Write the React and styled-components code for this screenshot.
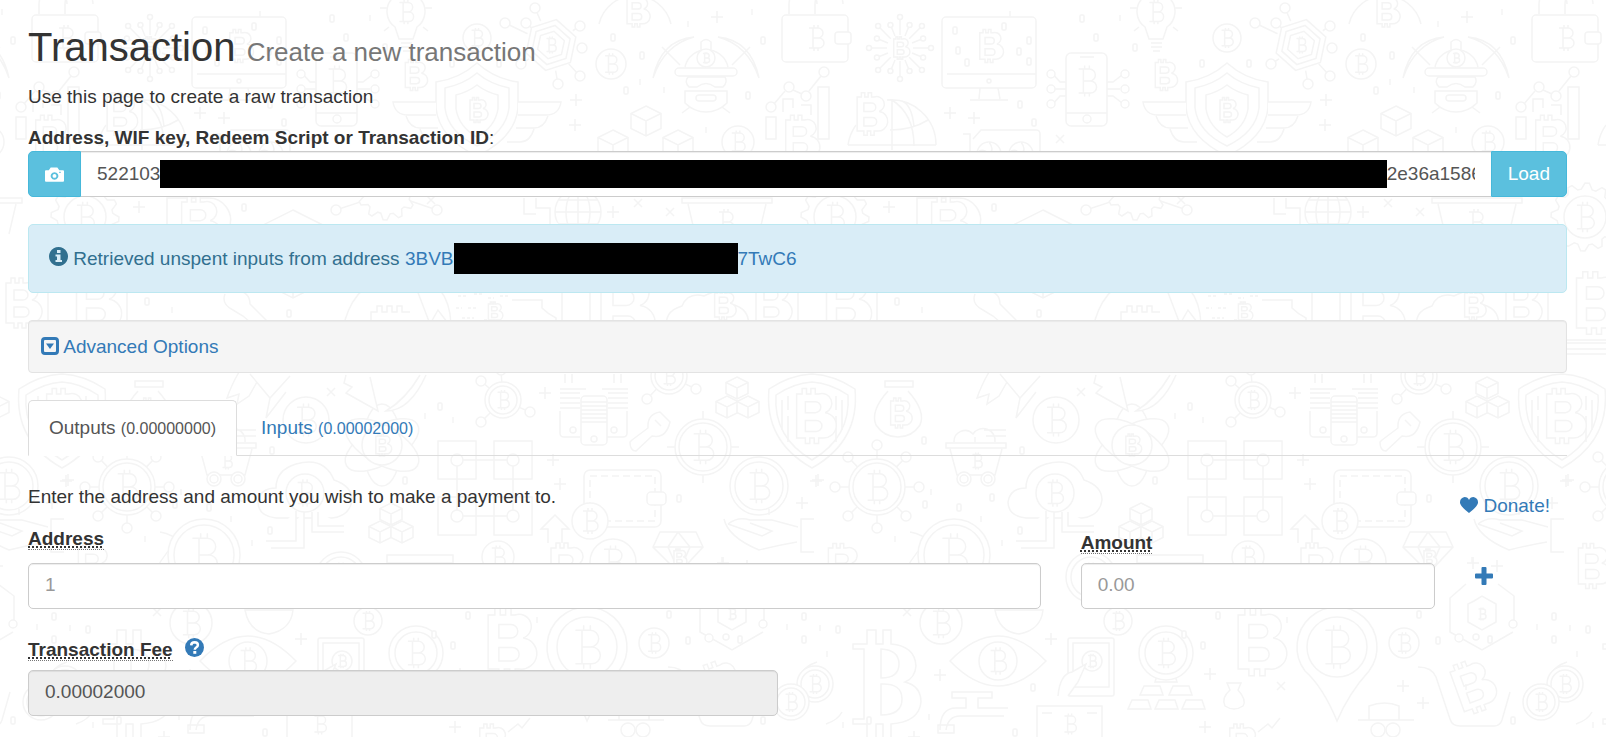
import { useState } from "react";
import styled, { createGlobalStyle } from "styled-components";

const COIN_MARK =
	"M-7-10H2a5 5 0 0 1 0 10H-3M2 0h1a5 5 0 0 1 0 10H-7M-3-10V10M-2-13v3M2-13v3M-2 10v3M2 10v3";
const FAT_MARK =
	"M-14-20h5v-5h4v5h4v-5h4v5h3a9 9 0 0 1 6 17a11 11 0 0 1-3 23h-3v5h-4v-5h-4v5h-4v-5h-8zM-6-13h9a5 5 0 0 1 0 10h-9zM-6 4h10a5 5 0 0 1 0 10h-10z";

const Mark = ({ x, y, s = 1, fat, turn = 0 }) => (
	<path
		d={fat ? FAT_MARK : COIN_MARK}
		vectorEffect="non-scaling-stroke"
		transform={`translate(${x} ${y}) rotate(${turn}) scale(${s})`}
	/>
);

const Coin = ({ x, y, r, ring }) => (
	<>
		<circle cx={x} cy={y} r={r} />
		{ring && <circle cx={x} cy={y} r={ring} />}
		<Mark x={x} y={y} s={(ring || r) / 18} />
	</>
);

const Cube = ({ x, y, r }) => (
	<path
		vectorEffect="non-scaling-stroke"
		transform={`translate(${x} ${y}) scale(${r})`}
		d="M0-1L1-.5V.5L0 1L-1 .5V-.5zM-1-.5L0 0L1-.5M0 0V1"
	/>
);

// twelve teeth, alternating between an inner and an outer radius
const Gear = ({ x, y, r }) => {
	const points = Array.from({ length: 48 }, (_, i) => {
		const a = (i * Math.PI) / 24;
		const reach = i % 4 < 2 ? r + 4 : r - 2;
		return `${(x + reach * Math.cos(a)).toFixed(1)},${(y + reach * Math.sin(a)).toFixed(1)}`;
	});
	return <polygon points={points.join(" ")} />;
};

const Node = ({ from, to, r = 5 }) => (
	<>
		<path d={`M${from}L${to}`} />
		<circle cx={to[0]} cy={to[1]} r={r} />
	</>
);

// [x, y, radius, inner ring]
const coins = [
	[611, 64, 15], [738, 142, 16], [477, 38, 14], [703, 447, 28, 24], [9, 486, 29, 24],
	[306, 420, 23], [204, 555, 36, 30], [613, 562, 23], [191, 623, 21], [368, 621, 14],
	[416, 653, 27, 21], [654, 643, 15], [498, 557, 16], [341, 577, 25, 20], [65, 684, 18, 14],
	[41, 702, 18, 14], [85, 217, 21], [503, 400, 18, 14], [669, 376, 18, 14], [127, 487, 28, 24],
];

const fatMarks = [
	[239, 46, 0.66], [49, 139, 0.95], [119, 114, 0.85], [636, 11, 0.64], [477, 110, 0.5],
	[414, 75, 0.62], [94, 303, 1.25], [62, 416, 1.1], [149, 413, 0.6], [91, 566, 0.9],
	[507, 642, 1.35], [494, 312, 0.4], [622, 310, 1.5], [723, 305, 0.6], [197, 224, 1.1],
	[382, 445, 0.44], [565, 568, 1], [491, 744, 0.8], [679, 558, 0.36], [20, 303, 1],
];

const hubs = [
	[[127, 487], 28, [[127, 445], [156, 457], [169, 487], [156, 516], [127, 528], [98, 516], [85, 487], [98, 457]]],
	[[503, 400], 18, [[481, 381], [530, 412], [481, 422], [501, 370]]],
	[[669, 376], 18, [[647, 399], [696, 389]]],
	[[387, 193], 24, [[336, 210], [437, 210]]],
	[[551, 45], 26, [[535, 8], [505, 23], [526, 23], [580, 26], [582, 48], [521, 64], [580, 76], [558, 84]]],
];

const cubes = [
	[646, 121, 15], [613, 145, 15], [678, 145, 15], [737, 388, 11], [727, 407, 11],
	[748, 407, 11], [391, 514, 11], [380, 532, 11], [402, 532, 11], [293, 254, 44],
];

const pluses = [
	[717, 17], [576, 100], [575, 125], [200, 113], [224, 118], [52, 503], [68, 480], [190, 675],
	[301, 639], [553, 460], [560, 484], [545, 393], [460, 674], [653, 686], [673, 703],
	[723, 563], [747, 566], [613, 212], [139, 207], [66, 481], [164, 737], [455, 727],
];

const crosses = [[531, 686], [157, 612], [331, 392], [638, 203], [670, 212], [310, 139], [431, 200]];

const zeros = [
	[13, 40], [613, 37], [642, 55], [626, 90], [748, 95], [332, 18], [346, 37], [385, 47],
	[452, 63], [499, 63], [270, 104], [284, 122], [254, 26], [279, 40], [205, 30], [208, 50],
	[217, 62], [269, 51], [279, 61], [174, 440], [272, 450], [175, 504], [242, 497], [209, 507],
	[270, 530], [679, 498], [669, 614], [54, 616], [88, 629], [54, 639], [453, 645], [468, 615],
	[283, 687], [119, 720], [265, 732], [147, 301], [289, 313], [440, 406], [244, 207], [405, 480],
	[688, 640], [740, 639], [13, 720], [434, 634],
];

const dashes = [
	[688, 24], [752, 12], [640, 82], [664, 90], [260, 14], [370, 18], [706, 130], [225, 440],
	[181, 492], [231, 519], [145, 539], [252, 543], [37, 627], [70, 628], [77, 654], [179, 717],
	[172, 310], [425, 416], [453, 420], [19, 512], [722, 560], [716, 687], [93, 725], [537, 620],
];

const Doodles = () => (
	<Backdrop aria-hidden="true">
		<defs>
			<g id="doodles">
				{hubs.map(([hub, r, ends]) =>
					ends.map((end) => {
						const length = Math.hypot(end[0] - hub[0], end[1] - hub[1]);
						const start = [
							hub[0] + ((end[0] - hub[0]) * r) / length,
							hub[1] + ((end[1] - hub[1]) * r) / length,
						];
						return <Node key={`${hub}-${end}`} from={start} to={end} />;
					})
				)}
				<Gear x={85} y={217} r={30} />
				<Gear x={387} y={190} r={26} />

				{/* padlock wallet */}
				<rect x="32" y="15" width="66" height="47" rx="4" />
				<rect x="85" y="32" width="16" height="12" rx="3" />
				<Mark x={66} y={38} />
				<path d="M39 14V4a12 12 0 0 1 28 0M65 14V4a12 12 0 0 1 28 0" />

				{/* circuit */}
				{Array.from({ length: 16 }, (_, i) => {
					const a = (i * Math.PI) / 8;
					const reach = i % 2 ? 25 : 31;
					return (
						<Node
							key={i}
							r={2.5}
							from={[150 + 13 * Math.cos(a), 48 + 13 * Math.sin(a)]}
							to={[150 + reach * Math.cos(a), 48 + reach * Math.sin(a)]}
						/>
					);
				})}
				<Mark x={150} y={48} fat s={0.45} />

				{/* monitor */}
				<rect x="192" y="17" width="94" height="71" rx="4" />
				<path d="M197 74h89M230 88l-1 11M248 88l2 11M220 100h38" />
				<circle cx="239" cy="81" r="2" />

				{/* phone */}
				<rect x="316" y="53" width="41" height="73" rx="5" />
				<path d="M316 113h41M330 57h14M357 82h6l9-7M357 89h13M357 96h6l9 7M316 82h-6l-8-9M316 89h-12M316 96h-6l-8 9" />
				<circle cx="337" cy="119" r="4" />
				<Mark x={337} y={81} s={1.2} />
				{[375, 301].map((x) => [74, 89, 104].map((y) => <circle key={`${x}${y}`} cx={x} cy={y} r="4" />))}

				{/* bulb */}
				<path d="M399 39l-4-12a19 19 0 1 1 22 0l-4 12zM401 43h11M401 47h11M403 51h7M387 8h-7M425 8h7M384 31l5-4M428 31l-5-4" />
				<Mark x={406} y={12} s={0.95} />

				{/* winged shield */}
				<path d="M477 63q18 16 41 19v26q-3 30-41 48q-38-18-41-48V82q23-3 41-19z" />
				<path d="M477 73q13 11 32 15v20q-3 24-32 38q-29-14-32-38V88q19-4 32-15z" />
				<path d="M477 85q9 7 21 10v14q-3 18-21 28q-18-10-21-28V95q12-3 21-10z" />
				<path d="M436 102h-43q2 13 15 13h28M406 116q4 12 14 12h18M420 129q4 13 14 13h13M518 102h43q-2 13-15 13h-28M548 116q-4 12-14 12h-18M534 129q-4 13-14 13h-13" />

				{/* hexagons */}
				{[26, 20, 14].map((r) => (
					<path
						key={r}
						vectorEffect="non-scaling-stroke"
						transform={`translate(551 45) rotate(12) scale(${r})`}
						d="M0-1L.87-.5V.5L0 1L-.87 .5V-.5z"
					/>
				))}
				<Mark x={551} y={45} s={0.65} />
				<path d="M599 24a37 37 0 0 1 72 0" />

				{/* miner */}
				<path d="M685 67a22 22 0 0 1 43 0M679 68h54a4 4 0 0 1 0 8h-54a4 4 0 0 1 0-8zM701 50v-8q5-5 10 0v8" />
				<circle cx="706" cy="58" r="9" />
				<Mark x={706} y={58} s={0.45} />
				<path d="M688 77h37q3 5-2 10h-8q-9-7-18 0h-8q-5-5-1-10zM685 91h42v12q-9 9-21 9t-21-9z" />
				<rect x="696" y="95" width="20" height="6" rx="3" />
				<path d="M653 78q8-38 41-41q-30 8-41 41zM662 47l18 18M759 78q-8-38-41-41q30 8 41 41zM750 47l-18 18M690 107l-8 6M722 107l8 6" />

				{/* chart */}
				<path d="M24 104l11-13M43 90l9 4M59 91l12-15M16 117h10v22h-10zM68 87h11v52h-11zM33 112v-13h10v9M51 105h10v10" />
				{[[21, 107], [39, 87], [56, 96], [74, 72]].map(([x, y]) => <circle key={x} cx={x} cy={y} r="5" />)}

				{/* globes */}
				<path d="M98 145a45 45 0 0 1 8-20M137 100a45 45 0 0 1 49 45M142 100v50M142 100q22 14 22 46M98 145h88M140 130q22 0 38-10M152 101q10 4 12 26" />
				<circle cx="578" cy="212" r="23" />
				<ellipse cx="578" cy="212" rx="12" ry="23" />
				<path d="M578 189v46M555 212h46M559 200h38M559 224h38" />

				{/* graphics card */}
				<path d="M213 134h7v20M223 139l8-9h55q4 0 4 4v20" />
				<circle cx="239" cy="154" r="12" />
				<circle cx="271" cy="154" r="12" />
				<path d="M239 142q6 8 0 12q-6-6-11-2M271 142q6 8 0 12q-6-6-11-2" />

				{/* bucket, board and coin stacks */}
				<path d="M682 198h90v5h-90zM688 204l7 30M766 204l-7 30" />
				<Mark x={726} y={222} />
				<path d="M167 240v-42h40a22 22 0 0 1 22 30M48 280v60h79v-60M30 343h110M30 349h110M30 354h110" />
				<path d="M524 198v16h12M536 198v10h14v20h12" />
				<path d="M345 320q12-40 52-46M440 290q10 12 11 34M417 290l13 34 8-14 12 16M371 320v-8h6v-6h5v6h5v-6h5v6h5v-6h5v6h8" />
				<path d="M512 300h30v8q6 6 14 10v12M562 290v40M590 293v32M668 330q-6-18 14-24q6-14 22-10q24-12 26 8q22 4 18 26" />
				<path d="M458 296h8M474 294h8M488 298h6M456 308h6M468 308h10M500 296h8M462 318h12M484 320h8" strokeDasharray="3 2" />

				{/* key and brush */}
				<path d="M630 442q0 9 6 9l16-15q14 3 18-14l-10-10q-13 2-12 16l-16 12zM655 420l6 6M225 294q-4 10 8 16l10 6 14 12M236 290q14 2 14 14l20 20" />
				<path d="M239 372q-8 14-12 26l12-4-2 10 12-8 8-14M250 374l20 24 20-22M270 398l-4 20 20-26" />

				{/* atom */}
				{[0, 60, 120].map((turn) => (
					<ellipse key={turn} cx="382" cy="445" rx="41" ry="19" transform={`rotate(${turn + 90} 382 445)`} />
				))}
				<circle cx="382" cy="445" r="20" />
				<path d="M346 375l-2 8 8 4-6 6 32 18-8-34M420 375q-14 24-34 36q24 0 40-36" />

				{/* block chain */}
				{[457, 513].map((x) =>
					[460, 516].map((y) => (
						<g key={`${x}${y}`}>
							<rect x={x - 19} y={y - 19} width="38" height="38" />
							<circle cx={x} cy={y} r="6" />
						</g>
					))
				)}
				<path d="M463 460h44M463 516h44M457 466v44M513 466v44" />

				{/* servers */}
				<path d="M560 389h26M560 393h20M560 398h20M560 403h20M560 408h20M602 389h26M608 393h20M608 398h20M608 403h20M608 408h20M565 374v9M572 374v9M614 374v9M621 374v9" />
				<path d="M560 411v22q0 4 4 4h16M627 411v22q0 4-4 4h-16" />
				<rect x="581" y="396" width="26" height="49" rx="4" />
				<path d="M581 402h26M581 406h26M581 410h26M581 414h26M581 418h26M581 422h26" />
				<circle cx="594" cy="439" r="3" />
				<circle cx="573" cy="430" r="3" />
				<circle cx="614" cy="430" r="3" />
				<path d="M703 411v72M667 447h72" />

				{/* shield */}
				<path d="M62 374q22 1 43 15q5 52-43 79q-48-27-43-79q21-14 43-15z" />
				<path d="M62 382q18 1 36 13q3 42-36 65q-39-23-36-65q18-12 36-13z" />
				<path d="M32 400v30M38 396v14M92 400v30M86 396v14M38 416v26M86 416v26" />

				{/* money bag, cart and cloud */}
				<path d="M135 381h28v6h-28zM138 391q-18 20-12 34q8 12 22 12t22-12q6-14-12-34" />
				<path d="M196 443h60v5h-60zM200 449l7 26h38l7-26M204 442a11 11 0 0 1 19-8a12 12 0 0 1 22 8M234 430h22M236 436h20" />
				<Mark x={227} y={461} s={0.65} />
				{[214, 238].map((x) => <g key={x}><circle cx={x} cy="479" r="7" /><circle cx={x} cy="479" r="4" /></g>)}
				<path d="M276 518q-18-2-18-16q2-14 18-14q0-18 20-24q28-8 38 16q18 6 18 20q-2 16-20 18z" />
				<Coin x={305} y={493} r={19} />
				<path d="M266 541h30v-30M271 548h33v-36M312 512v20h32M318 512v14h26" />

				{/* wallet, arrow, diamond, hand */}
				<rect x="584" y="470" width="77" height="57" rx="6" />
				<rect x="590" y="476" width="65" height="45" strokeDasharray="7 4" />
				<rect x="647" y="492" width="19" height="13" rx="4" />
				<Coin x={590} y={521} r={18} />
				<path d="M548 543v-14h-7l14-14 14 14h-7v14M660 532h36l7 15-24 26-26-26zM653 547h50M668 547l10-15 12 15-11 25z" />
				<path d="M724 519q4 18 35 31q20-5 38-8M728 524q10-8 22-4h22l26 7M728 524l34 12 10-5-22-8M814 519h-13v33h13" />
				<path d="M160 532q26 4 36 40M155 572q10-22 28-34M387 555h66v8h-66z" />

				{/* eye, tablet, gold bars */}
				<path d="M200 661q48-50 96 0q-48 50-96 0z" />
				<Coin x={248} y={661} r={19} />
				<path d="M245 610q4 22 24 24q22-4 24-24z" />
				<rect x="318" y="638" width="46" height="58" rx="2" />
				<rect x="323" y="643" width="36" height="44" />
				<Coin x={342} y={661} r={10} />
				<path d="M308 696q2-22 14-24l14-8-8 18-10 14" />
				<path d="M408 672h16l3 10h-22zM394 686h16l3 9h-23zM423 686h16l3 9h-23zM382 700h16l3 9h-23zM409 700h16l3 9h-23zM436 700h16l3 9h-23z" />

				{/* map pin */}
				<path d="M587 721q-14-34-32-50a40 40 0 1 1 64 0q-20 22-32 50z" />
				<Coin x={587} y={647} r={30} />

				{/* hexagon circuit */}
				<path d="M716 584l-16 14v34l32 18 31-18M748 584l16 12v28M724 601l8-5 14 8v18l-14 8-14-8v-18z" />
				<Mark x={732} y={614} s={0.5} />
				<circle cx="709" cy="638" r="4" />
				<circle cx="726" cy="637" r="3" />
				<circle cx="763" cy="624" r="4" />

				{/* large coin sign */}
				<path d="M103 644h14v-14h9v14h7v-14h8v14q24 2 25 22q-1 12-11 16q16 4 16 20q-2 20-30 22v14h-8v-14h-7v14h-9v-14h-14v-5h11v-70h-11zM131 649v29q18 0 18-14t-18-15zM131 684v31q21 0 21-16t-21-15z" />

				{/* basket, spy, pouch, tap and bank note */}
				<path d="M668 667q14 0 18 10l14 42q2 7 10 7h34q6 0 8-6l8-28" />
				<Mark x={721} y={687} fat s={1.05} turn={-20} />
				<path d="M608 720h56M619 720v-14q16-6 30 0v14M51 674q4-8 16-12M92 712q-4 8-16 12" />
				<circle cx="628" cy="730" r="7" />
				<circle cx="643" cy="730" r="7" />
				<path d="M477 683h14l-3 7q9 10 5 16q-9 6-18 0q-4-8 5-16z" />
				<path d="M190 730q0-22 16-22h10v-10h-14v-6h40v6h-14v10h30M196 730q2-14 14-14h44M188 725h16v8h-16zM287 780v-74h65v74M292 713h10M337 713h10" />
				<Mark x={320} y={724} s={0.8} />
				<path d="M508 732l10-8 4 4 8-10M116 168h12v8h10" />

				{coins.map(([x, y, r, ring]) => <Coin key={`${x}${y}`} x={x} y={y} r={r} ring={ring} />)}
				{fatMarks.map(([x, y, s]) => <Mark key={`${x}${y}`} x={x} y={y} s={s} fat />)}
				{cubes.map(([x, y, r]) => <Cube key={`${x}${y}`} x={x} y={y} r={r} />)}
				{pluses.map(([x, y]) => <path key={`${x}${y}`} d={`M${x - 6} ${y}h12M${x} ${y - 6}v12`} />)}
				{crosses.map(([x, y]) => <path key={`${x}${y}`} d={`M${x - 4} ${y - 4}l8 8M${x + 4} ${y - 4}l-8 8`} />)}
				{zeros.map(([x, y]) => <rect key={`${x}${y}`} x={x - 2} y={y - 3} width="4" height="7" rx="1" />)}
				{dashes.map(([x, y]) => <path key={`${x}${y}`} d={`M${x} ${y - 3}v6`} />)}
			</g>
		</defs>
		{[-750, 0, 750, 1500, 2250].map((x) => <use key={x} href="#doodles" x={x} />)}
	</Backdrop>
);

const CameraIcon = () => (
	<Icon width="19" height="15" viewBox="0 0 20 15">
		<path
			fillRule="evenodd"
			d="M0 4q0-1 1-1h3l2-3h7l2 3h4q1 0 1 1v10q0 1-1 1H1q-1 0-1-1zM10 5a4 4 0 1 0 .01 0zM10 7a2 2 0 1 1-.01 0zM15 4.500v1.500h1.500v-1.500z"
		/>
	</Icon>
);

const InfoIcon = () => (
	<Icon width="19" height="19" viewBox="0 0 19 19" $raised>
		<path
			fillRule="evenodd"
			d="M9.500 0a9.500 9.500 0 1 0 .01 0zM8 3h3.500v3H8zM6.500 7.500h5V13H13v2H6.500v-2H8V9.500H6.500z"
		/>
	</Icon>
);

const QuestionIcon = () => (
	<Icon width="19" height="19" viewBox="0 0 19 19" $raised>
		<circle cx="9.5" cy="9.5" r="9.500" />
		<path d="M6.200 7.300q.2-3 3.400-3q3.300.1 3.300 2.700q0 1.500-1.700 2.500q-1.400.8-1.400 2.200" fill="none" stroke="#fff" strokeWidth="2.500" />
		<path d="M8.300 13h3v2.800h-3z" fill="#fff" />
	</Icon>
);

const CollapseIcon = () => (
	<Icon width="18" height="18" viewBox="0 0 18 18">
		<rect x="1.500" y="1.500" width="15" height="15" rx="2.500" fill="none" stroke="currentColor" strokeWidth="3" />
		<path d="M5 6.500h8l-4 5.500z" />
	</Icon>
);

const HeartIcon = () => (
	<Icon width="18" height="16" viewBox="0 0 18 16" $raised>
		<path d="M9 16Q1 10 0 6Q-.3 1 4.500 0Q8 0 9 3Q10 0 13.500 0Q18.300 1 18 6Q17 10 9 16z" />
	</Icon>
);

const PlusIcon = () => (
	<Icon width="18" height="18" viewBox="0 0 18 18">
		<path d="M6.500 1q0-1 1-1h3q1 0 1 1v5.500H17q1 0 1 1v3q0 1-1 1h-5.500V17q0 1-1 1h-3q-1 0-1-1v-5.500H1q-1 0-1-1v-3q0-1 1-1h5.500z" />
	</Icon>
);

const App = () => {
	const [address, setAddress] = useState("");
	const [amount, setAmount] = useState("");

	return (
		<Page>
			<GlobalStyle />
			<Doodles />
			<Content>
				<Title>
					Transaction <small>Create a new transaction</small>
				</Title>
				<Lead>Use this page to create a raw transaction</Lead>

				<label htmlFor="source">
					<b>Address, WIF key, Redeem Script or Transaction ID</b>:
				</label>
				<InputGroup>
					<GroupButton type="button" aria-label="Scan QR code">
						<CameraIcon />
					</GroupButton>
					<MaskedField>
						<KeyPart id="source" defaultValue="522103" $width={63} />
						<KeyMask />
						<KeyPart aria-label="End of key" defaultValue="2e36a1586" $width={88} />
					</MaskedField>
					<GroupButton type="button">Load</GroupButton>
				</InputGroup>

				<Alert role="status">
					<InfoIcon /> Retrieved unspent inputs from address{" "}
					<Link href="#address">
						3BVB
						<AddressMask />
						7TwC6
					</Link>
				</Alert>

				<Well>
					<Link href="#advanced">
						<CollapseIcon /> Advanced Options
					</Link>
				</Well>

				<Tabs>
					<Tab href="#outputs" $active>
						Outputs <small>(0.00000000)</small>
					</Tab>
					<Tab href="#inputs">
						Inputs <small>(0.00002000)</small>
					</Tab>
				</Tabs>

				<Intro>
					<p>Enter the address and amount you wish to make a payment to.</p>
					<DonateLink href="#donate">
						<HeartIcon /> Donate!
					</DonateLink>
				</Intro>

				<Row>
					<Field $span={8} $gap={11}>
						<label htmlFor="address">
							<Hint title="Recipient address">Address</Hint>
						</label>
						<Control
							id="address"
							placeholder="1"
							value={address}
							onChange={(e) => setAddress(e.target.value)}
						/>
					</Field>
					<Field $span={3} $gap={7}>
						<label htmlFor="amount">
							<Hint title="Amount to send">Amount</Hint>
						</label>
						<Control
							id="amount"
							placeholder="0.00"
							value={amount}
							onChange={(e) => setAmount(e.target.value)}
						/>
					</Field>
					<AddLink href="#add" aria-label="Add output">
						<PlusIcon />
					</AddLink>
				</Row>

				<Row>
					<Field $span={6} $gap={7}>
						<FeeLabel>
							<label htmlFor="fee">
								<Hint title="Inputs minus outputs">Transaction Fee</Hint>
							</label>
							<Link href="#fees" aria-label="About fees">
								<QuestionIcon />
							</Link>
						</FeeLabel>
						<Control id="fee" value="0.00002000" readOnly />
					</Field>
				</Row>
			</Content>
		</Page>
	);
};

const GlobalStyle = createGlobalStyle`
	* {
		box-sizing: border-box;
	}

	body {
		margin: 0;
		background: #fff;
		color: #333;
		font: 19px/27px "Liberation Sans", Arial, sans-serif;
	}

	p {
		margin: 0;
	}

	input,
	button {
		font: inherit;
	}
`;

const Page = styled.div`
	position: relative;
	min-height: 100vh;
	overflow: hidden;
`;

const Backdrop = styled.svg`
	position: absolute;
	inset: 0;
	width: 100%;
	height: 100%;
	fill: #fff;
	stroke: #f4f4f4;
	stroke-width: 1.5px;
`;

const Content = styled.main`
	position: relative;
	padding: 25px 39px 22px 28px;
`;

const Icon = styled.svg`
	fill: currentColor;
	vertical-align: ${({ $raised }) => ($raised ? "-1px" : "-2px")};
`;

const Title = styled.h1`
	margin: 0 0 14px;
	font-size: 40px;
	line-height: 44px;
	font-weight: 400;

	small {
		font-size: 26px;
		line-height: 26px;
		color: #777;
	}
`;

const Lead = styled.p`
	&& {
		margin-bottom: 14px;
	}
`;

const InputGroup = styled.div`
	display: flex;
	height: 46px;
	margin-bottom: 27px;
`;

const GroupButton = styled.button`
	padding: 0 16px 2px;
	border: 1px solid #46b8da;
	background: #5bc0de;
	color: #fff;
	cursor: pointer;

	&:first-child {
		border-radius: 5px 0 0 5px;
	}

	&:last-child {
		border-radius: 0 5px 5px 0;
	}

	&:hover {
		background: #31b0d5;
	}
`;

const MaskedField = styled.div`
	flex: 1;
	min-width: 0;
	display: flex;
	align-items: center;
	padding: 0 16px;
	border: solid #ccc;
	border-width: 1px 0;
	background: #fff;
	box-shadow: inset 0 1px 1px rgba(0, 0, 0, 0.075);
`;

const KeyPart = styled.input`
	width: ${({ $width }) => $width}px;
	padding: 0 0 2px;
	border: 0;
	outline: 0;
	background: transparent;
	color: #555;
`;

const KeyMask = styled.span`
	flex: 1;
	height: 28px;
	background: #000;
`;

const AddressMask = styled.span`
	display: inline-block;
	width: 284px;
	height: 31px;
	margin: -4px 0 -2px;
	vertical-align: middle;
	background: #000;
`;

const Link = styled.a`
	color: #337ab7;
	text-decoration: none;
`;

const Alert = styled.div`
	margin-bottom: 27px;
	padding: 20px;
	border: 1px solid #bce8f1;
	border-radius: 5px;
	background: #d9edf7;
	color: #31708f;
`;

const Well = styled.div`
	margin-bottom: 27px;
	padding: 12px;
	border: 1px solid #e3e3e3;
	border-radius: 4px;
	background: #f5f5f5;
	box-shadow: inset 0 1px 1px rgba(0, 0, 0, 0.05);
`;

const Tabs = styled.nav`
	display: flex;
	gap: 3px;
	margin-bottom: 27px;
	border-bottom: 1px solid #ddd;
`;

const Tab = styled(Link)`
	margin-bottom: -1px;
	padding: 13px 20px;
	border: 1px solid ${({ $active }) => ($active ? "#ddd" : "transparent")};
	border-bottom-color: ${({ $active }) => ($active ? "#fff" : "transparent")};
	border-radius: 5px 5px 0 0;
	background: ${({ $active }) => ($active ? "#fff" : "transparent")};
	color: ${({ $active }) => ($active ? "#555" : "#337ab7")};

	small {
		font-size: 16px;
	}
`;

const Intro = styled.div`
	display: flex;
	justify-content: space-between;
	margin-bottom: 6px;
`;

const DonateLink = styled(Link)`
	padding: 9px 17px 0 0;
`;

const Row = styled.div`
	display: grid;
	grid-template-columns: repeat(12, minmax(0, 1fr));
	column-gap: 40px;
	align-items: end;
	margin-bottom: 27px;

	&:last-child {
		margin-bottom: 0;
	}
`;

const Field = styled.div`
	grid-column: span ${({ $span }) => $span};
	display: flex;
	flex-direction: column;
	align-items: flex-start;
	gap: ${({ $gap }) => $gap}px;
`;

const Hint = styled.abbr`
	border-bottom: 1px dotted #777;
	font-weight: 700;
	text-decoration: underline dotted;
	cursor: help;
`;

const Control = styled.input`
	width: 100%;
	height: 46px;
	padding: 0 16px 2px;
	border: 1px solid #ccc;
	border-radius: 5px;
	background: #fff;
	color: #555;
	box-shadow: inset 0 1px 1px rgba(0, 0, 0, 0.075);

	&::placeholder {
		color: #999;
	}

	&:read-only {
		background: #eee;
	}
`;

const FeeLabel = styled.div`
	display: flex;
	gap: 12px;
`;

const AddLink = styled(Link)`
	align-self: start;
	padding-top: 38px;
`;

export default App;
